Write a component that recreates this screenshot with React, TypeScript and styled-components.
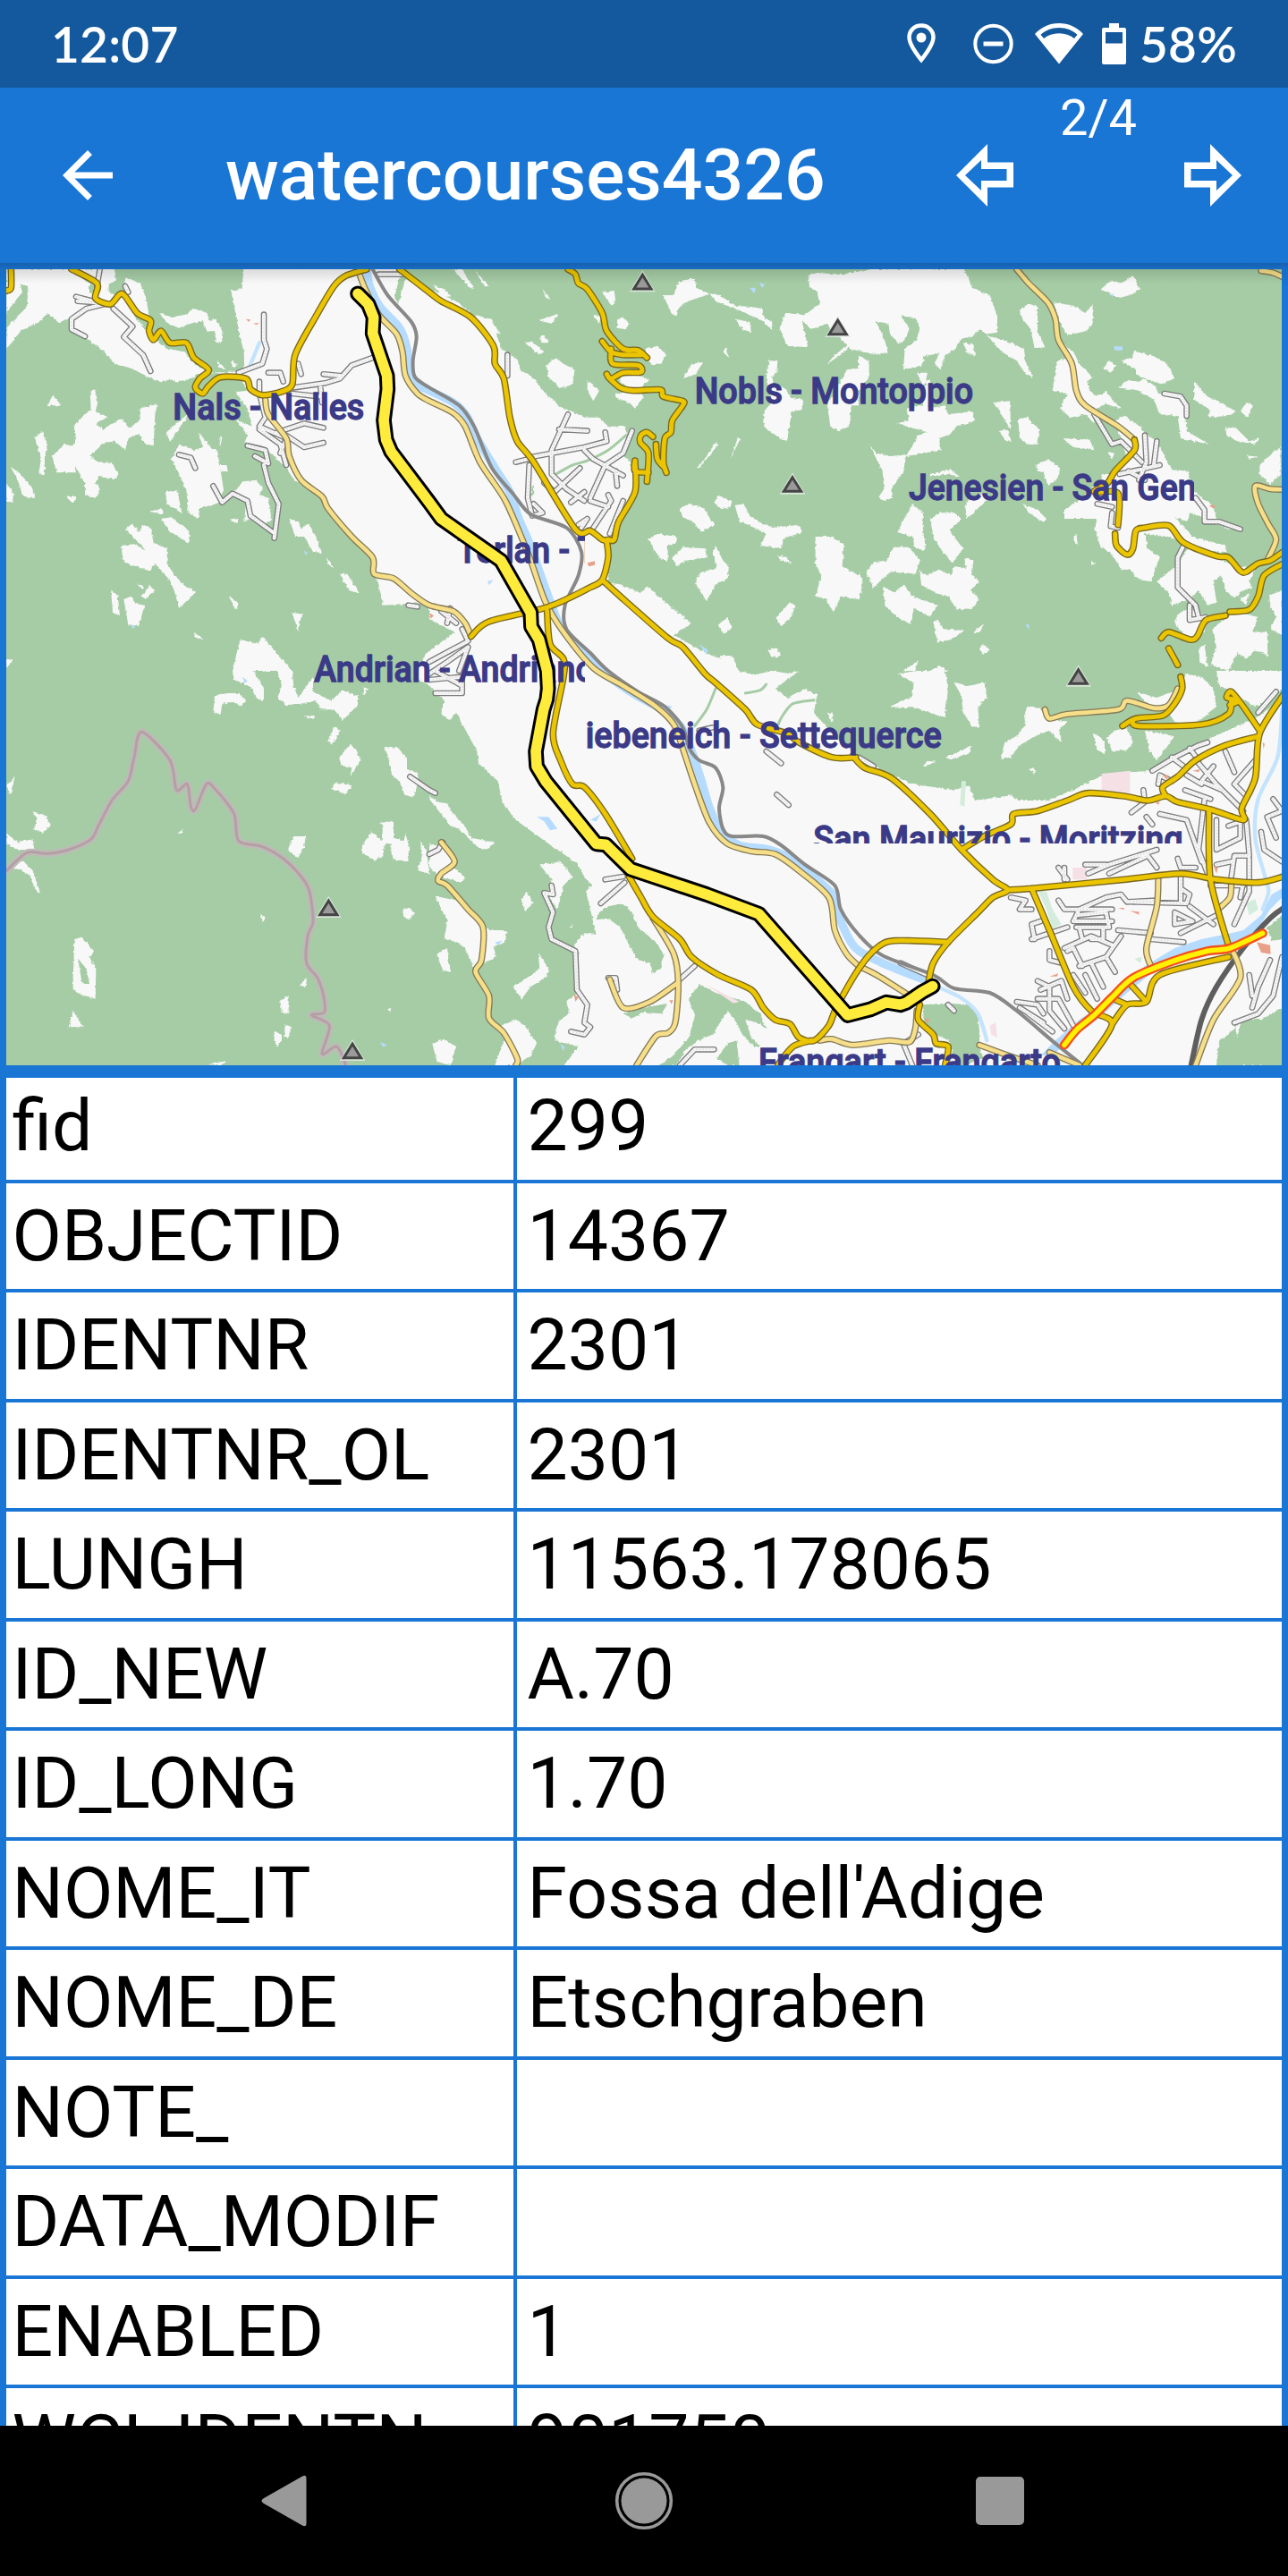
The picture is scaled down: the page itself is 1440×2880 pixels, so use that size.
import React from 'react';
import styled, { createGlobalStyle } from 'styled-components';

const GlobalStyle = createGlobalStyle`
  *, *::before, *::after { box-sizing: border-box; }
  html, body { margin: 0; padding: 0; background: #000; }
  body { font-family: Roboto, 'Noto Sans', sans-serif; }
`;

const BLUE = '#1976d5';

/* ---------- layout ---------- */

const Screen = styled.div`
  width: 1440px;
  height: 2880px;
  display: flex;
  flex-direction: column;
  overflow: hidden;
  background: ${BLUE};
`;

const StatusBar = styled.header`
  flex: none;
  height: 98px;
  padding: 0 57px 0 57px;
  display: flex;
  align-items: center;
  justify-content: space-between;
  background: #14599d;
  color: #fff;
`;

const StatusText = styled.span<{ $width: number }>`
  width: ${p => p.$width}px;
  font-family: 'Lato Semibold', Lato, Roboto, sans-serif;
  font-weight: 600;
  font-size: 55px;
  line-height: 98px;
  letter-spacing: 0.2px;
  white-space: nowrap;
`;

const StatusIcons = styled.div`
  display: flex;
  align-items: center;
  height: 98px;
`;

const Glyph = styled.svg<{ $gap?: number }>`
  display: block;
  flex: none;
  margin-right: ${p => p.$gap ?? 0}px;
`;

const AppBar = styled.div`
  flex: none;
  height: 196px;
  padding: 0 52px 0 70px;
  display: flex;
  align-items: center;
  color: #fff;
  background: ${BLUE};
`;

const Title = styled.h1`
  flex: 1;
  margin: 0 0 0 126px;
  font-weight: 500;
  font-size: 80.5px;
  line-height: 94px;
  white-space: nowrap;
`;

const Pager = styled.div`
  display: flex;
  align-items: center;
  height: 196px;
`;

const PageCount = styled.span`
  align-self: flex-start;
  width: 191px;
  margin-top: -1px;
  padding-right: 1px;
  text-align: center;
  font-size: 56px;
  line-height: 70px;
`;

const Body = styled.main`
  flex: 1;
  min-height: 0;
  padding: 7px 7px 0;
  display: flex;
  flex-direction: column;
  overflow: hidden;
  background: linear-gradient(#1561ae, #186cc3 7px, ${BLUE} 28px);
`;

const MapFrame = styled.div`
  flex: none;
  height: 904px;
  border-bottom: 14px solid ${BLUE};
  overflow: hidden;
`;

const MapSvg = styled.svg`
  display: block;
  width: 1426px;
  height: 890px;
`;

const Table = styled.div`
  flex: none;
  display: flex;
  flex-direction: column;
  margin-top: -5px;
  background: #fff;
  clip-path: inset(5px 0 0 0);
`;

const Row = styled.div`
  display: grid;
  grid-template-columns: 567px 1fr;
  height: 122.5px;
  border-bottom: 4px solid ${BLUE};
`;

const Cell = styled.div<{ $value?: boolean }>`
  padding-left: ${p => (p.$value ? 11.5 : 6.5)}px;
  border-left: ${p => (p.$value ? `4px solid ${BLUE}` : 'none')};
  color: #000;
  font-size: 80.5px;
  line-height: 118px;
  white-space: nowrap;
`;

const NavBar = styled.nav`
  flex: none;
  height: 168px;
  display: flex;
  align-items: center;
  padding-left: 292px;
  background: #000;
`;

/* ---------- map data: every sheet is 1440 x 1380 units ---------- */

type Sheet = { c: number; r: number; s: string };
type Point = [number, number];

const toPoints = ({ c, r, s }: Sheet): Point[][] =>
  s.split(';').map(poly =>
    poly
      .trim()
      .split(/\s+/)
      .map(pt => {
        const [x, y] = pt.split(',').map(Number);
        return [x + c * 1440, y + r * 1380] as Point;
      }),
  );

const straight = (pts: Point[]) => 'M' + pts.map(p => p.join(' ')).join('L');

/* Catmull-Rom curve through every point, written as cubic segments. */
const curved = (pts: Point[]) => {
  let d = `M${pts[0].join(' ')}`;
  for (let i = 0; i < pts.length - 1; i++) {
    const a = pts[Math.max(i - 1, 0)];
    const b = pts[i];
    const c = pts[i + 1];
    const e = pts[Math.min(i + 2, pts.length - 1)];
    const k = 7;
    d += `C${b[0] + (c[0] - a[0]) / k} ${b[1] + (c[1] - a[1]) / k} ${c[0] - (e[0] - b[0]) / k} ${c[1] - (e[1] - b[1]) / k} ${c[0]} ${c[1]}`;
  }
  return d;
};

const linePath = (list: Sheet[], smooth?: boolean) =>
  list.flatMap(toPoints).map(smooth ? curved : straight).join('');

const areaPath = (list: Sheet[]) =>
  list.flatMap(toPoints).map(p => straight(p) + 'Z').join('');

const valley: Sheet[] = [
  { c: 0, r: 0, s: `818,20 812,98 775,104 792,190 805,260 818,310 820,375 700,380 660,385 640,400 590,412 570,400 540,412 500,395 440,365 385,352 350,310 290,265 235,235 235,190 250,130 340,100 410,130 450,190 500,250 560,300 620,310 650,350 700,378 800,390 830,440 790,445 830,500 845,560 810,545 790,535 830,590 820,615 880,625 930,670 960,700 990,745 1010,755 1080,800 1160,910 1250,1005 1250,1060 1268,1080 1285,1160 1370,1155 1440,1150 1440,1205 1525,1250 1430,1320 1390,1400 1440,1430 1490,1480 1480,1525 1510,1545 1530,1520 1600,1650 1605,1690 1670,1750 1685,1820 1730,1880 1840,1960 1935,2025 1965,2080 1985,2100 1965,2120 1980,2180 2000,2265 1960,2260 1925,2300 1940,2330 1930,2400 1945,2500 1870,2560 1860,2620 1940,2640 1880,2720 4320,2720 4320,1900 4320,1380 4290,1480 4225,1530 4030,1620 3960,1650 3870,1715 3790,1720 3690,1735 3600,1780 3510,1815 3420,1815 3390,1798 3270,1815 3250,1765 3200,1780 3060,1760 2960,1715 2880,1665 2800,1600 2730,1520 2740,1460 2700,1440 2640,1470 2550,1400 2480,1380 2440,1350 2390,1330 2350,1310 2260,1260 2320,1220 2230,1150 2170,1095 2150,1120 2080,1090 2040,1085 2040,960 2070,900 2130,780 2115,680 2080,650 2110,610 2095,560 2040,560 2010,530 1960,530 1920,510 1880,495 1830,450 1790,400 1745,370 1735,335 1680,300 1650,200 1590,190 1530,140 1440,100 1300,20` },
];

const clearings: Sheet[] = [
  { c: 0, r: 0, s: `22,33 60,60 75,110 50,140 22,180;40,33 230,33 300,80 300,120 250,150 240,190 200,215 160,180 130,210 70,240 22,300 22,230 60,190 90,160 95,90 60,80;240,33 380,33 390,70 365,85 365,125 420,110 420,60 470,80 490,130 500,190 400,170 330,90;535,180 575,195 620,185 650,165 695,180 700,205 725,200 745,240 745,275 725,280 720,240 695,242 680,205 640,215 600,230 560,215;540,345 580,385 575,405 545,380;510,352 540,380 560,410 530,398;775,335 795,355 780,360;730,340 758,368 735,362;160,490 178,455 205,490;302,445 318,435 328,480 320,510 362,528 320,550 345,570 405,535 435,565 470,540 470,500 528,485 520,520 515,625 490,620 465,585 430,600 420,640 385,610 350,615 300,660 330,680 375,680 398,722 385,738 330,728 320,750 335,770 320,800 285,790 285,750 250,690 255,715 190,715 175,660 215,620 245,625 255,600 245,560 285,515 305,505;115,595 145,578 160,625 150,660 150,725 130,720 138,665 125,625;35,695 70,720 105,765 118,800 95,800 75,790 60,740;22,750 45,785 42,815 22,812;220,795 258,795 245,818;735,595 745,595 740,628;575,670 600,620 650,640 680,630 665,580 710,635 730,640 735,690 760,690 765,712 740,710 750,770 735,815 710,825 670,835 665,870 632,850 625,775 610,740;558,580 640,510 570,612;500,845 545,835 548,855;555,780 595,775 610,852 560,820;540,870 575,865 635,910 635,952 570,915;815,745 860,740 880,765 870,790 900,800 910,870 890,895 860,860 820,880 825,810 775,790;770,875 800,870 795,885;420,905 445,885 465,915 480,890 505,900 515,950 560,970 560,1020 590,1065 620,1095 658,1115 600,1170 585,1110 560,1065 520,1020 500,1045 415,1015 405,960 450,955 490,975;372,1108 395,1130 402,1195 378,1185;415,1140 440,1130 455,1155 485,1160 465,1230 430,1225;475,1130 500,1095 520,1110 490,1140;455,1090 485,1095 480,1105;765,1125 800,1155 792,1175;650,1250 685,1275 655,1268;980,1185 1018,1190 1003,1215 1000,1250 990,1215;970,870 1000,880 1010,905 1035,885 1060,930 1080,985 1050,980 1020,930 990,930;1095,1000 1120,1035 1100,1025;1140,1055 1165,1055 1205,1120 1170,1110;805,1275 865,1290 880,1265 920,1310 980,1380 780,1380;22,1340 45,1345 22,1370` },
  { c: 1, r: 0, s: `80,33 110,33 150,100 130,90;150,33 200,90 185,90;10,85 50,100 75,125 45,125;155,185 200,200 240,250 200,245;380,100 408,135 390,130;580,110 620,105 625,140 610,155;365,205 435,182 410,215;370,265 385,250 398,280 380,280;320,280 345,275 385,310 370,320;392,355 425,330 450,350 488,370 480,420 440,432 400,395;530,405 570,440 550,475 530,440;550,185 575,190 570,215;630,205 650,190 668,215 660,235 630,230;725,300 765,290 795,320 780,345 750,355 725,330;640,390 700,385 738,405 700,440 640,415;620,450 700,440 720,460 690,500 670,480 630,465;785,120 820,120 835,75 890,62 895,95 940,115 860,145 835,165 830,190 815,185;940,115 975,120 1025,155 1085,160 1115,165 1125,200 1150,210 1150,238 1115,205 1050,175 960,140;1025,200 1075,210 1080,245 1050,235;1270,55 1300,45 1500,60 1510,200 1440,260 1380,320 1335,350 1360,320 1400,290 1400,240 1360,260 1335,215 1280,235 1250,205 1270,295 1200,290 1175,230 1195,180 1260,185 1310,150 1300,110 1275,90;985,310 995,295 1005,330;880,350 915,345 895,385 850,400;1140,340 1168,340 1165,380 1150,390 1155,420 1190,430 1215,465 1255,470 1250,505 1215,510 1200,610 1180,600 1130,570 1120,550 1125,505 1150,480 1130,400;1385,400 1400,370 1440,365 1440,490 1415,490 1410,555 1375,577 1345,560 1335,490 1365,430;960,615 970,620 905,700 900,695 930,660;1035,598 1042,602 1010,670;955,815 970,792 1015,810 1010,830 980,838;840,835 870,820 920,835 955,890 915,915 885,880 850,865;1025,825 1055,820 1075,860 1105,880 1150,900 1240,890 1250,915 1190,935 1180,970 1110,960 1130,920 1070,890 1040,880;735,940 765,920 830,930 830,950 800,960 800,1015 770,1000;815,1000 850,965 925,970 930,1000 860,1010 830,1030;950,985 960,960 985,1010 1005,1030 1000,1070 960,1090 930,1145 890,1085 910,1050 965,1035;1165,990 1200,1000 1215,1020 1180,1010;1295,930 1350,930 1390,955 1385,1030 1440,1060 1440,1140 1380,1130 1355,1185 1330,1140 1295,1130 1315,1060 1295,1020;1210,1150 1228,1165 1205,1210 1180,1230 1160,1205;970,1225 1000,1200 1015,1235 985,1258;1135,1310 1165,1302 1180,1330 1150,1335;975,1330 1015,1330 1040,1380 985,1380` },
  { c: 2, r: 0, s: `-120,60 45,33 60,80 50,130 40,190 70,230 100,310 60,320 -30,300 -110,210;45,33 355,33 380,95 440,120 465,190 465,245 430,250 405,235 380,260 345,265 325,300 290,320 275,370 255,350 270,315 220,325 215,355 150,370 155,300 195,270 205,230 190,195 140,190 170,230 160,260 135,285 105,250 100,215 40,205;0,320 35,345 35,395 0,440;350,280 385,285 390,325 365,315;430,255 500,275 555,300 560,345 585,395 560,385 530,340 480,310;540,170 570,148 600,160 600,240 625,295 590,297 575,230 545,195;655,145 720,155 760,180 785,150 785,210 765,240 700,255 670,200;690,285 720,310 740,350 785,395 765,410 775,440 800,460 830,440 850,470 880,500 830,485 800,500 790,550 760,520 710,530 675,500 700,450 650,440 665,340 700,330;812,100 850,70 880,80 920,55 945,100 910,120 865,130 840,110;820,365 840,342 865,355 845,380;880,340 915,330 925,308 990,325 1035,350 1060,400 1015,418 975,405 930,385 930,370;870,430 905,405 940,410 955,400 995,425 1005,450 1090,460 1100,575 1175,620 1125,610 1080,600 1070,525 1010,520 990,470 940,440;1125,410 1170,460 1205,475 1265,510 1235,525 1170,530 1180,505 1125,470;1280,510 1300,480 1322,490 1305,530;1230,565 1265,565 1310,610 1345,600 1330,620 1270,610 1235,590;1300,658 1340,662 1310,668;1345,690 1385,650 1415,630 1415,720 1380,755 1345,720;130,550 170,540 160,500 215,490 230,380 195,380 215,420 240,400 235,500 290,490 300,520 380,510 390,540 330,560 310,585 270,600 275,640 160,660 200,590 230,580;450,480 508,475 510,570 490,540 470,500;470,575 500,572 512,612 495,610;535,535 565,530 605,570 598,620 565,620 540,600;685,600 775,605 790,640 720,630;35,620 60,650 105,660 160,655 150,710 110,770 115,800 85,810 65,800 85,770 80,710;240,720 310,705 340,730 300,720 240,728;595,690 635,670 675,700 670,735 635,760 620,715 600,710;550,820 600,840 632,870 620,882 570,850;358,830 370,800 430,780 440,800 360,870;180,820 215,850 215,900 225,975 190,970 180,930 130,915;240,870 270,850 320,850 345,870 305,910 350,970 315,1018 280,980 250,930;115,965 170,965 205,1010 190,1055 110,1045 50,1100 25,1050 50,1015 95,1010;205,1045 230,1060 270,1040 310,1060 320,1030 360,1035 355,1000 385,1010 380,1060 405,1080 375,1110 405,1140 380,1170 330,1175 300,1130 260,1120 210,1090;80,1095 120,1120 150,1090 180,1130 265,1160 240,1200 185,1170 175,1225 130,1200 90,1165;250,1215 265,1208 285,1240 355,1245 310,1275 265,1285;385,1250 420,1222 405,1255;405,1305 420,1290 440,1310 415,1325;0,1050 15,1080 0,1150;150,1380 200,1345 190,1380;860,540 890,525 930,550 970,590 1000,610 1030,670 1050,705 1105,710 1115,770 1190,830 1200,870 1280,900 1240,905 1160,870 1110,850 1105,880 1060,865 1120,930 1230,960 1235,985 1150,975 1040,930 960,920 970,970 1010,1000 980,1080 940,1075 910,1040 880,1040 850,990 810,960 790,900 800,870 690,870 690,840 750,800 800,750 820,720 870,720 900,670;835,645 858,650 850,670;655,905 700,940;720,940 730,920 735,960;780,1010 795,1020 780,1025;1000,1080 1065,1030 1110,960 1200,990 1240,1020 1330,1040 1310,1080 1320,1100 1290,1110 1260,1135 1230,1110 1215,1060 1190,1080 1200,1150 1170,1160 1140,1110 1110,1140 1050,1160 1040,1120;1070,1190 1110,1170 1170,1200 1160,1250 1100,1270 1060,1220;1185,1240 1260,1180 1340,1200 1320,1250 1370,1250 1372,1330 1330,1310 1300,1340 1270,1320 1240,1380 1180,1360 1200,1300;1280,1140 1310,1120 1300,1160;1380,1125 1420,1110 1420,1260 1380,1240 1400,1200 1375,1150;1140,1310 1160,1290 1170,1370 1145,1350;240,1380 270,1362 300,1380` },
  { c: 0, r: 1, s: `780,0 850,0 885,60 885,105 860,90 840,50 785,30;720,85 760,75 800,75 825,100 810,118 780,105 745,110 740,145 715,140;930,0 980,0 985,50 1000,90 1050,20 1050,70 1080,85 1110,100 1150,65 1200,85 1200,115 1150,165 1120,130 1075,130 1060,100 1010,110 960,115 930,90 945,50;1015,152 1055,150 1055,162;1120,190 1140,200 1115,248 1100,235;1065,200 1095,200;1175,245 1195,265 1210,300 1195,325 1175,352 1180,325 1145,318 1138,290;1110,395 1125,375 1180,385 1160,415;1290,255 1335,258 1365,295 1365,330 1405,345 1385,430 1355,410 1340,370 1315,350 1305,300;110,472 155,485 170,520 145,543 112,530 125,500;22,545 60,575 110,565 115,600 60,600 22,580;60,620 110,670 135,745 115,730 100,685 60,665 22,660;595,545 615,530 612,545;22,385 50,355 35,415;985,555 1025,555 1020,590 1000,628 965,600;1215,585 1245,540 1280,570 1285,520 1270,510 1320,505 1320,560 1355,570 1360,545 1375,600 1368,640 1315,630 1310,580 1290,580 1285,620 1255,635 1215,610;1410,570 1430,600 1440,680 1400,670 1415,630;870,815 890,825 882,845;245,1030 250,900 275,893 315,940 300,960 322,1000 320,1100 270,1085 245,1070;230,1195 245,1140 278,1195;940,1105 968,1090 968,1150 945,1145;920,1210 945,1220 945,1240 930,1260 920,1240;955,1185 978,1195 965,1235 955,1225;1350,800 1375,795 1392,815 1370,838 1350,820;1300,1135 1312,1130 1308,1145;700,1320 760,1308 740,1323;1220,55 1235,60 1220,82;1030,1030 1025,1060 1005,1055` },
  { c: 1, r: 1, s: `0,420 30,440 60,445 80,480 120,520 140,560 220,575 190,600 160,590 100,530 70,520 0,430;0,580 70,600 85,660 120,695 105,710 40,690 0,660;20,755 90,770 160,830 200,870 260,870 255,910 215,925 225,960 180,980 155,1010 120,930 90,910 50,900 60,840;25,950 60,930 70,1010 45,1005;310,770 325,740 350,780 320,805;370,650 440,640 480,690 450,720 430,800 400,760 410,700;280,1060 330,1030 370,1000 365,945 400,1000 395,1025 340,1060 310,1100;240,1190 290,1170 320,1190 360,1250 340,1290 290,1323 220,1323 250,1240;10,1250 50,1235 90,1260 70,1323 25,1310;440,1200 480,1180 460,1110 500,1080 530,1110 540,1200 490,1250 440,1230;780,80 790,80;1060,20 1150,0 1210,10 1240,0 1160,60;1335,140 1355,140 1350,175;470,860 482,850 475,862` },
  { c: 2, r: 1, s: `130,10 200,0 290,0 300,60 290,155 250,145 195,125 105,120 180,85 185,40;320,38 370,50 425,38 430,90 400,120 405,190 380,185 350,140 345,85;565,120 610,125 640,160 700,170 670,200 685,240 665,230 640,200 590,220 540,250 510,290 475,295 490,240 530,220 560,180 555,150;290,290 340,270 380,252 370,275 310,298;215,322 230,302 260,305;570,330 590,325 590,345;785,210 800,215 825,240 825,280 800,265;830,225 860,200 900,190 920,240 900,265 850,270;960,200 1060,220 1030,260 1000,300 975,270;930,70 1000,90 1080,60 1095,10 1150,20 1190,60 1200,120 1150,160 1110,185 1060,170 1030,130 990,130;1200,0 1420,0 1420,60 1370,100 1330,120 1270,80 1210,50` },
];

const woods: Sheet[] = [
  { c: 0, r: 0, s: `1340,60 1362,60 1335,150 1325,120;850,650 890,640 905,690 870,680` },
  { c: 1, r: 0, s: `345,755 355,780 340,800` },
  { c: 0, r: 1, s: `262,965 290,1000 300,1050 275,1050` },
  { c: 1, r: 1, s: `570,810 600,790 650,780 680,810 700,860 760,910 785,950 775,1000 750,1015 740,980 700,970 670,920 640,860 600,830 560,835;870,1100 905,1050 960,1080 1060,1110 1110,1150 1130,1200 1100,1180 1060,1170 1080,1230 1110,1260 1090,1260 1050,1220 1030,1180 1000,1140 950,1220 900,1240 860,1270 830,1323 770,1323 820,1290 870,1230 890,1160;650,1150 720,1130 800,1115 780,1150 720,1145 680,1165;965,1300 1000,1250 1030,1240 1040,1323 1000,1323` },
  { c: 2, r: 1, s: `215,1120 300,1115 370,1120 400,1150 405,1210 400,1260 420,1300 360,1323 330,1323 300,1240 220,1200;1420,1130 1350,1170 1290,1170 1240,1220 1210,1240 1200,1323 1425,1323;1370,860 1425,815 1425,900 1385,905;1260,1180 1285,1165 1270,1230` },
];

const hedges: Sheet[] = [
  { c: 1, r: 0, s: `660,590 600,640 530,675 480,690 425,720` },
  { c: 1, r: 1, s: `960,60 930,130 890,185;1290,98 1220,110 1185,150 1170,180;1060,75 1110,65 1130,45` },
];
const parks: Sheet[] = [
  { c: 2, r: 1, s: `600,735 630,740 650,800 680,850 650,865 630,800;1300,780 1330,765 1340,800 1310,820;925,965 950,960 945,980;345,370 360,370 355,455 340,450;810,870 825,870 820,880` },
];
const builtUp: Sheet[] = [
  { c: 2, r: 1, s: `815,345 910,335 910,410 815,400;718,660 765,660 765,700 718,700;440,1190 460,1180 465,1230 445,1220` },
  { c: 1, r: 1, s: `925,1050 1040,1110 1020,1115` },
];
const accents: Sheet[] = [
  { c: 2, r: 1, s: `1335,910 1380,920 1382,950 1350,945;1190,655 1205,660 1200,680;1020,350 1040,350 1035,365;640,1025 670,1015 665,1025;870,795 890,795 890,802;910,805 940,808 940,818;1120,335 1145,330 1140,340;995,440 1010,440 1005,450;1355,240 1362,245 1358,262;220,1165 238,1170 230,1182` },
  { c: 1, r: 0, s: `530,1018 555,1012 555,1025 535,1030;0,1185 15,1195 5,1205` },
  { c: 1, r: 1, s: `485,1085 500,1095 490,1110;805,1105 818,1105 812,1118` },
  { c: 0, r: 0, s: `825,200 840,202 835,210;850,215 870,212 860,220` },
  { c: 2, r: 0, s: `1175,825 1198,825 1190,836` },
];
const ponds: Sheet[] = [
  { c: 2, r: 0, s: `855,292 885,292 885,305 860,305;560,1225 572,1225 570,1242;845,115 858,118 850,125` },
  { c: 1, r: 0, s: `1075,95 1095,95 1090,115;1108,78 1125,85 1115,95;905,1290 935,1310 930,1325;195,1080 215,1075 200,1092` },
  { c: 1, r: 1, s: `360,490 400,490 430,530 405,535 385,505;540,500 575,480 560,505;795,115 815,120 800,135;430,545 470,550;220,910 245,905 230,920;440,1250 455,1262 448,1275` },
  { c: 0, r: 0, s: `1018,975 1032,985 1025,992;440,1225 455,1230 445,1240` },
  { c: 0, r: 1, s: `812,20 830,32 822,42;1275,1245 1298,1255 1285,1262` },
  { c: 2, r: 1, s: `1290,870 1250,880 1150,900 1060,930 960,990 900,1050 830,1110 740,1170 660,1240 610,1290 650,1290 720,1230 800,1170 900,1080 1000,1000 1100,950 1240,925 1330,880 1380,800 1420,760 1420,730 1385,750 1350,820` },
];

const streams: Sheet[] = [
  { c: 0, r: 0, s: `870,280 835,365` },
  { c: 2, r: 1, s: `1420,130 1405,290 1340,430 1330,560 1360,680 1375,740 1355,800` },
  { c: 2, r: 1, s: `240,1050 340,1095 400,1150 430,1240` },
];
const river: Sheet[] = [
  { c: 0, r: 0, s: `1230,33 1240,90 1275,160 1340,230 1365,300 1370,370 1400,420 1440,440 1520,480 1565,525 1600,600 1660,700 1710,780 1740,870 1775,950 1810,1050 1850,1160 1880,1230 1950,1310 2030,1390 2130,1460 2220,1510 2285,1570 2320,1650 2350,1740 2380,1840 2420,1920 2480,1965 2580,1980 2650,2010 2740,2080 2800,2140 2820,2220 2870,2310 2960,2360 3110,2420` },
];
const rail: Sheet[] = [
  { c: 0, r: 0, s: `1250,33 1300,120 1380,210 1397,260 1385,340 1392,395 1440,430 1540,490 1590,560 1650,700 1720,785 1780,855 1900,900 1950,980 1940,1060 1895,1160 1900,1240 1980,1320 2040,1380 2140,1450 2230,1500 2290,1570 2312,1640 2345,1680 2400,1705 2425,1770 2412,1840 2425,1910 2455,1935 2560,1935 2620,1965 2700,2030 2800,2100 2820,2180 2880,2265 2960,2335 3130,2400 3200,2445 3320,2460 3410,2520 3540,2630 3640,2710` },
];
const yard: Sheet[] = [
  { c: 2, r: 1, s: `1115,1323 1150,1170 1200,1060 1290,930 1380,830 1425,795` },
];

const streets: Sheet[] = [
  { c: 0, r: 0, s: `335,33 325,90;350,150 290,165 240,200 240,235 285,258;380,165 445,225 415,260 480,320 505,375;255,125 330,145 260,140;420,90 430,110;885,185 885,270 895,300 880,350 800,380;600,655 640,665 655,700;830,625 890,640 900,685 855,660;885,690 900,750 935,820 920,935;715,760 745,815 780,785 830,810 840,860 915,915;985,430 1090,415 1140,400 1180,355 1250,330;1000,350 1010,385;1085,385 1140,390;900,380 940,380 950,410;870,570 940,620 960,690;930,580 1020,550 1085,565;960,590 1020,630 1085,615;870,410 870,450 890,530 870,560 960,600 940,650;980,450 1070,460;1075,430 1080,480 ;1370,1160 1400,1165;1270,50 1350,50` },
  { c: 1, r: 0, s: `262,320 262,390;465,520 410,640 410,720 460,770 520,810;350,665 290,680;330,665 520,630 595,610 590,580;435,570 530,575;335,690 330,800 345,860 380,850 350,820;680,575 650,650 590,690 540,800;520,640 550,670 650,725;630,760 625,710;385,750 420,780 505,700;475,815 520,780;600,790 610,810 550,900;540,810 600,830;650,810 605,920;500,890 530,870 510,900;0,1350 130,1280 110,1240;0,1390 60,1350 130,1300 100,1380;40,1180 90,1220;70,1170 60,1220` },
  { c: 2, r: 0, s: `1025,450 1080,460 1100,490 1100,525;790,520 850,620 880,610 950,680;960,590 965,680 940,740;1000,610 990,690;875,720 1010,690;905,710 960,740;850,850 845,895 870,900;1090,960 1070,1000 1070,1100 1130,1160 1140,1200;1110,1160 1110,1210 1165,1200;1130,800 1160,840 1160,880 1210,880 1280,905;800,820 850,830` },
  { c: 0, r: 1, s: `1375,355 1440,400` },
  { c: 1, r: 1, s: `0,30 110,20 110,75 20,75;20,0 110,50;0,400 20,410;0,615 30,600 45,575;590,700 650,690;575,780 655,710;410,720 415,750 385,745 415,810 400,860 410,900 490,940 495,1070 530,1120 520,1180 540,1195 520,1220 475,1210;840,1035 890,990;600,1030 625,1030 630,1070;840,1323 890,1270 955,1270;1130,270 1180,310;1165,415 1205,450;905,200 950,190` },
  { c: 2, r: 1, s: `0,290 50,320;985,335 1060,290 1140,250 1170,240;1050,370 1010,350 1005,380;1050,290 1090,320;1110,260 1140,300;915,475 960,440 955,400;965,490 985,515;1140,310 1200,380 1290,470;1100,350 1150,380;1095,400 1180,430;1220,400 1150,370 1190,320;1230,270 1260,340;1330,300 1260,380 1300,420;1160,430 1140,600 1170,680;1010,480 1100,500 1150,640;1200,500 1200,600 1280,560 1280,500;1240,520 1300,500 1310,620 1260,620 1250,690;1350,540 1360,600 1420,640;1390,430 1420,470 1370,490 1400,560;1000,600 840,650 770,680;760,650 830,650;840,680 970,620 1000,660;700,700 670,660;690,660 690,700;1070,630 1080,660 1130,660;1080,690 1080,780;1000,770 900,775 880,750 830,760 740,800 720,840 850,840;730,820 830,810 840,860 730,860;1080,730 1110,750 1100,780 920,775;590,900 580,850 610,840;580,900 700,860;670,770 690,800 850,800;690,930 780,890 850,920;740,860 750,900;820,860 820,900 780,900;640,940 640,970 680,980;700,940 720,930 750,990;880,890 830,960 740,990;830,960 860,1010;780,980 820,1060;760,1020 800,1100;720,1020 760,1080;870,870 980,880;980,900 1090,910;1060,810 1120,840 1060,850 1060,820;1080,880 1200,820;1110,790 1190,850;1260,850 1310,740;1290,710 1280,760;510,760 560,770 540,800 580,800;530,1110 600,1120 620,1150;600,1040 640,1060 640,1140 690,1200;570,1150 650,1210;600,1100 670,1100 720,1190;610,1070 680,1040 700,1100;540,1130 620,1180;1340,140 1400,70;1380,970 1340,1060 1320,1130;1420,960 1390,1090 1340,1150 1260,1180;1310,1020 1320,1090;300,1120 320,1140;140,980 230,1020;180,1323 150,1250 200,1220;1310,630 1310,740;1180,720 1290,720;1200,650 1250,640` },
];

const minorRoads: Sheet[] = [
  { c: 0, r: 0, s: `1200,33 1225,100 1270,185 1330,250 1350,310 1360,390 1400,450 1440,475 1520,515 1560,560 1610,680 1690,800 1740,910 1780,1010 1830,1150 1890,1250 1990,1370 2090,1430 2200,1500 2260,1560 2290,1640 2330,1760 2380,1890 2440,1960 2520,1985 2600,1995 2680,2050 2780,2140 2800,2250 2840,2330 2880,2370` },
  { c: 0, r: 0, s: `890,470 900,520 960,600 970,660 1010,740 1080,795 1100,835 1180,930 1250,1000 1255,1055 1320,1070 1380,1120 1440,1160 1520,1180 1560,1220 1580,1265` },
  { c: 2, r: 0, s: `530,33 570,80 635,145 660,200 670,270 715,350 730,440 760,490 870,560 925,605;1350,38 1390,45 1425,60;1425,772 1380,770 1330,760 1340,820 1375,890 1400,940 1370,1010` },
  { c: 1, r: 1, s: `40,575 85,640 40,680 30,705 60,720 130,800 180,860 175,970 155,1010 200,1090 200,1165 250,1215 295,1300 290,1323;750,830 820,950 835,1050 825,1180 800,1215 760,1225 695,1323;835,1045 740,1110 650,1130 605,1035;1310,1240 1350,1235 1420,1255 1540,1240 1610,1245 1630,1200 1635,1140` },
  { c: 2, r: 1, s: `0,990 60,1020 140,1070 170,1090;405,1255 500,1290 600,1323;625,130 640,160 700,145 870,130 900,100 990,125 1040,115 1070,60;1005,690 1000,790 965,930 980,990;1250,705 1245,760 1205,800;1250,930 1280,1030 1190,1170 1130,1323;640,1280 740,1323` },
];
const mainRoads: Sheet[] = [
  { c: 0, r: 0, s: `37,33 37,95 22,105;240,33 325,80 320,130 370,150 410,115 460,180 505,205 500,240 515,270 540,240 570,280 625,280 650,330 700,370 670,400 655,430 680,450 700,425 740,395 825,400 840,435 880,455 940,445 980,420 990,320 1060,190 1120,90 1160,55 1230,33;1340,33 1440,110 1480,140 1580,195 1655,290 1660,350 1690,400 1710,530 1735,610 1790,680 1930,905 1980,910 2020,940 2040,940 2060,940 2075,880 2130,780 2130,680` },
  { c: 1, r: 0, s: `465,33 490,50 500,80 530,100 580,180 595,240 650,300 700,305 730,330;580,275 610,310 650,320 710,320;610,300 615,350 700,355 710,378 650,380 610,400 595,385;600,395 640,430 685,440 775,437 785,460 850,475 850,490 815,540 810,580 790,600 785,680 795,715;760,620 765,670 790,700;750,595 730,580 710,590 708,615 735,650 730,745;690,675 690,710 735,715;595,945 600,1000 580,1075 540,1100 400,1165 200,1215 140,1265;580,1075 640,1130 800,1270 850,1300 925,1390 960,1420 1060,1510 1100,1560 1200,1590 1240,1620 1350,1670 1430,1670;395,1180 405,1290 450,1340 450,1400 415,1590 440,1680 480,1760 520,1770 590,1860 680,2010` },
  { c: 2, r: 0, s: `925,605 925,640 860,710 835,750 790,780 870,785 870,890;860,920 865,960 900,990 920,970 930,910 960,900 1040,893 1090,950 1200,995 1240,1000 1280,1045 1300,1048 1340,1020 1380,1010 1425,980;1425,1020 1360,1060 1340,1130 1310,1175 1245,1182;1230,1195 1165,1210 1135,1265 1110,1275 1040,1250 1015,1270;1040,1305 1070,1360` },
  { c: 1, r: 1, s: `670,690 710,760 750,825 840,900 880,960 970,1020 1080,1070 1120,1130 1160,1170 1210,1185 1240,1230 1290,1240 1340,1190 1365,1130 1440,1000 1500,930 1560,905 1740,910;1280,1240 1220,1260 1170,1320` },
  { c: 2, r: 1, s: `-20,285 20,325 110,360 240,480 345,600 450,700 500,735 450,760 400,810 300,910 250,980 235,1040;345,600 420,555 510,515 520,480 600,470 700,435 770,410 890,420 970,435 1030,420 1070,440 1180,465 1290,500 1285,460 1330,360 1345,210 1425,80;500,735 580,730 890,700 1080,680 1200,700 1340,710 1425,690;580,730 640,870 720,1060 780,1140 850,1185 760,1323;850,1185 900,1120 965,1110 1010,1020 1240,960;865,1105 900,1120;910,1050 965,1110;1175,470 1180,700 1240,920;1030,420 1020,390 1070,355 1130,300 1230,250 1340,220;1345,200 1290,120 1250,70 1235,90 1275,100 1245,115;885,185 930,160 1020,150 1060,110 1085,60 1080,20;920,165 940,185 1150,180 1240,145 1250,100;205,1120 200,1170 250,1220 260,1250 300,1260 290,1323` },
];
const motorway: Sheet[] = [
  { c: 2, r: 1, s: `690,1255 730,1205 790,1155 850,1095 920,1030 1050,975 1170,940 1245,930 1355,880` },
];
const border: Sheet[] = [
  { c: 0, r: 1, s: `22,670 90,610 160,613 230,600 305,565 330,520 375,435 430,370 450,290 475,205 570,300 592,400 628,380 640,455 655,465 692,380 720,395 785,480 800,570 880,590 950,630 1010,690 1038,740 1050,840 1032,890 1028,980 1065,1030 1085,1090 1088,1145 1045,1155 1105,1190 1080,1285 1130,1260 1160,1323` },
];
const track: Sheet[] = [
  { c: 0, r: 0, s: `1200,115 1235,150 1253,195 1250,248 1298,390 1300,435 1287,540 1295,605 1312,645 1440,815 1480,870 1680,1010 1780,1185 1782,1232 1808,1275 1835,1380 1838,1440 1834,1475 1823,1510 1797,1650 1800,1700 1830,1750 2000,1960 2032,1963 2115,2045 2370,2130 2545,2195 2843,2535 2920,2515 2973,2492 3020,2500 3040,2493 3095,2456 3128,2438` },
];

const peaks: Point[] = [
  [2155, 78], [2810, 230], [2658, 757], [3617, 1402], [1102, 2177], [1182, 2657],
];

type Label = { x: number; y: number; len: number; text: string; clip?: string };
const labels: Label[] = [
  { x: 580, y: 538, len: 642, text: 'Nals - Nalles' },
  { x: 2330, y: 482, len: 934, text: 'Nobls - Montoppio' },
  { x: 3048, y: 808, len: 965, text: 'Jenesien - San Gen', clip: 'east' },
  { x: 1534, y: 1017, len: 470, text: 'Terlan - T', clip: 'west' },
  { x: 1054, y: 1415, len: 940, text: 'Andrian - Andriano', clip: 'west' },
  { x: 1964, y: 1638, len: 1194, text: 'iebeneich - Settequerce' },
  { x: 2728, y: 1986, len: 1240, text: 'San Maurizio - Moritzing', clip: 'north' },
  { x: 2544, y: 2734, len: 1014, text: 'Frangart - Frangarto' },
];

type LineProps = {
  data: Sheet[];
  color: string;
  width: number;
  dash?: string;
  smooth?: boolean;
};

const Line: React.FC<LineProps> = ({ data, color, width, dash, smooth }) => (
  <path
    d={linePath(data, smooth)}
    fill="none"
    stroke={color}
    strokeWidth={width}
    strokeDasharray={dash}
    strokeLinejoin="round"
    strokeLinecap={dash ? 'butt' : 'round'}
  />
);

const Area: React.FC<{ data: Sheet[]; color: string }> = ({ data, color }) => (
  <path d={areaPath(data)} fill={color} />
);

const WaterMap: React.FC = () => (
  <MapSvg viewBox="7 301 1426 890" preserveAspectRatio="none">
    <defs>
      <clipPath id="west"><rect x="0" y="0" width="1962" height="2760" /></clipPath>
      <clipPath id="east"><rect x="0" y="0" width="4005" height="2760" /></clipPath>
      <clipPath id="north"><rect x="0" y="0" width="4320" height="1959" /></clipPath>
      <filter id="rough" x="0" y="0" width="100%" height="100%">
        <feTurbulence type="fractalNoise" baseFrequency="0.09" numOctaves="2" seed="4" />
        <feDisplacementMap in="SourceGraphic" scale="11" xChannelSelector="R" yChannelSelector="G" />
      </filter>
      <linearGradient id="shade" x1="0" y1="0" x2="0" y2="1">
        <stop offset="0" stopColor="#000" stopOpacity="0.12" />
        <stop offset="1" stopColor="#000" stopOpacity="0" />
      </linearGradient>
    </defs>
    <rect x="7" y="301" width="1426" height="890" fill="#a5cca5" />
    <g transform="translate(0 290) scale(0.333333)">
      <g filter="url(#rough)">
        <Area data={valley} color="#f8f8f8" />
        <Area data={clearings} color="#f8f8f8" />
        <Area data={woods} color="#a5cca5" />
      </g>
      <Line data={hedges} color="#a5cca5" width={9} smooth />
      <Area data={parks} color="#d3ecdb" />
      <Area data={builtUp} color="#f5e0e6" />
      <Area data={ponds} color="#b5dcff" />
      <Line data={streams} color="#c4e3fc" width={13} smooth />
      <Line data={river} color="#b5dcff" width={28} smooth />
      <Line data={border} color="#c0b9b9" width={23} smooth />
      <Line data={border} color="#b3a0a3" width={9} smooth />
      <Line data={streets} color="#7c7c7c" width={20} />
      <Line data={streets} color="#f6f6f6" width={12} />
      <Line data={streets} color="#dedede" width={5} dash="4 7" />
      <Area data={accents} color="#e9a088" />
      <Line data={rail} color="#888" width={12} smooth />
      <Line data={yard} color="#5e5e5e" width={18} smooth />
      <Line data={minorRoads} color="#857a58" width={22} smooth />
      <Line data={minorRoads} color="#f6df88" width={14} smooth />
      <Line data={mainRoads} color="#77661f" width={23} smooth />
      <Line data={mainRoads} color="#ebc500" width={15} smooth />
      <Line data={motorway} color="#f4501e" width={31} smooth />
      <Line data={motorway} color="#fff200" width={17} smooth />
      {peaks.map(([x, y]) => (
        <g key={`${x}-${y}`} transform={`translate(${x} ${y})`}>
          <path d="M0-42L43 31H-43Z" fill="#e6ece6" opacity="0.8" />
          <path d="M0-26L29 21H-29Z" fill="#9a9a9a" stroke="#444" strokeWidth="9" />
        </g>
      ))}
      {labels.map(l => (
        <g key={l.text} clipPath={l.clip ? `url(#${l.clip})` : undefined}>
          <text
            x={l.x}
            y={l.y}
            textLength={l.len}
            lengthAdjust="spacingAndGlyphs"
            fontFamily="Roboto, sans-serif"
            fontWeight={500}
            fontSize={120}
            fill="#3b3a87"
            stroke="#3b3a87"
            strokeWidth={4}
          >
            {l.text}
          </text>
        </g>
      ))}
      <Line data={track} color="#000" width={53} />
      <Line data={track} color="#ffeb3b" width={35} />
    </g>
    <rect x="7" y="301" width="1426" height="16" fill="url(#shade)" />
  </MapSvg>
);

/* ---------- table ---------- */

const attributes: [string, string][] = [
  ['fid', '299'],
  ['OBJECTID', '14367'],
  ['IDENTNR', '2301'],
  ['IDENTNR_OL', '2301'],
  ['LUNGH', '11563.178065'],
  ['ID_NEW', 'A.70'],
  ['ID_LONG', '1.70'],
  ['NOME_IT', "Fossa dell'Adige"],
  ['NOME_DE', 'Etschgraben'],
  ['NOTE_', ''],
  ['DATA_MODIF', ''],
  ['ENABLED', '1'],
  ['WCI_IDENTN', '901750'],
];

const PagerArrow: React.FC<{ flip?: boolean }> = ({ flip }) => (
  <Glyph width="64" height="70" viewBox="0 0 64 70">
    <path
      transform={flip ? 'translate(64 0) scale(-1 1)' : undefined}
      d="M35 0V20.500H64V48.500H35V70L0 35ZM28 18L10 35L28 52V41H56.500V28H28Z"
      fill="#fff"
      fillRule="evenodd"
    />
  </Glyph>
);

export default function App() {
  return (
    <>
      <GlobalStyle />
      <Screen>
        <StatusBar>
          <StatusText $width={140}>12:07</StatusText>
          <StatusIcons>
            <Glyph $gap={42} width="32" height="46" viewBox="0 0 32 46">
              <path d="M16 2.500C8.200 2.500 2.500 8.300 2.500 15.800C2.500 25 16 41 16 41S29.500 25 29.500 15.800C29.500 8.300 23.800 2.500 16 2.500Z" fill="none" stroke="#fff" strokeWidth="4.500" />
              <circle cx="16" cy="16" r="5.500" fill="#fff" />
            </Glyph>
            <Glyph $gap={24} width="45" height="46" viewBox="0 0 45 46">
              <circle cx="22.500" cy="23" r="20.200" fill="none" stroke="#fff" strokeWidth="4" />
              <path d="M11.500 23H33.500" stroke="#fff" strokeWidth="5" />
            </Glyph>
            <Glyph $gap={20} width="54" height="46" viewBox="0 0 54 46">
              <path d="M27 0C16 0 7 4.500 0 12L27 45.500L54 12C47 4.500 38 0 27 0ZM27 5C35.500 5 42 8 47.500 12.800L44 17C39.500 13.500 33.500 11.300 27 11.300S14.500 13.500 10 17L6.500 12.800C12 8 18.500 5 27 5Z" fill="#fff" fillRule="evenodd" />
            </Glyph>
            <Glyph $gap={14} width="29" height="46" viewBox="0 0 29 46">
              <path d="M9 0H20V5H26Q28 5 28 7V44Q28 46 26 46H3Q1 46 1 44V7Q1 5 3 5H9ZM5 10V22.500H24V10Z" fill="#fff" fillRule="evenodd" />
            </Glyph>
            <StatusText $width={109}>58%</StatusText>
          </StatusIcons>
        </StatusBar>

        <AppBar>
          <Glyph width="56" height="56" viewBox="0 0 56 56">
            <path d="M56 24.500H13.400L33 4.900L28 0L0 28L28 56L32.900 51.100L13.400 31.500H56Z" fill="#fff" />
          </Glyph>
          <Title>watercourses4326</Title>
          <Pager>
            <PagerArrow />
            <PageCount>2/4</PageCount>
            <PagerArrow flip />
          </Pager>
        </AppBar>

        <Body>
          <MapFrame>
            <WaterMap />
          </MapFrame>
          <Table>
            {attributes.map(([name, value]) => (
              <Row key={name}>
                <Cell>{name}</Cell>
                <Cell $value>{value}</Cell>
              </Row>
            ))}
          </Table>
        </Body>

        <NavBar>
          <Glyph $gap={344} width="51" height="58" viewBox="0 0 51 58">
            <path d="M46 1.500Q50.500-1 50.500 4V54Q50.500 59 46 56.500L3 32Q-2 29 3 26Z" fill="#999" />
          </Glyph>
          <Glyph $gap={338} width="66" height="66" viewBox="0 0 66 66">
            <circle cx="33" cy="33" r="30.300" fill="none" stroke="#999" strokeWidth="3.600" />
            <circle cx="33" cy="33" r="25.500" fill="#999" />
          </Glyph>
          <Glyph width="54" height="54" viewBox="0 0 54 54">
            <rect width="54" height="54" rx="5" fill="#999" />
          </Glyph>
        </NavBar>
      </Screen>
    </>
  );
}
